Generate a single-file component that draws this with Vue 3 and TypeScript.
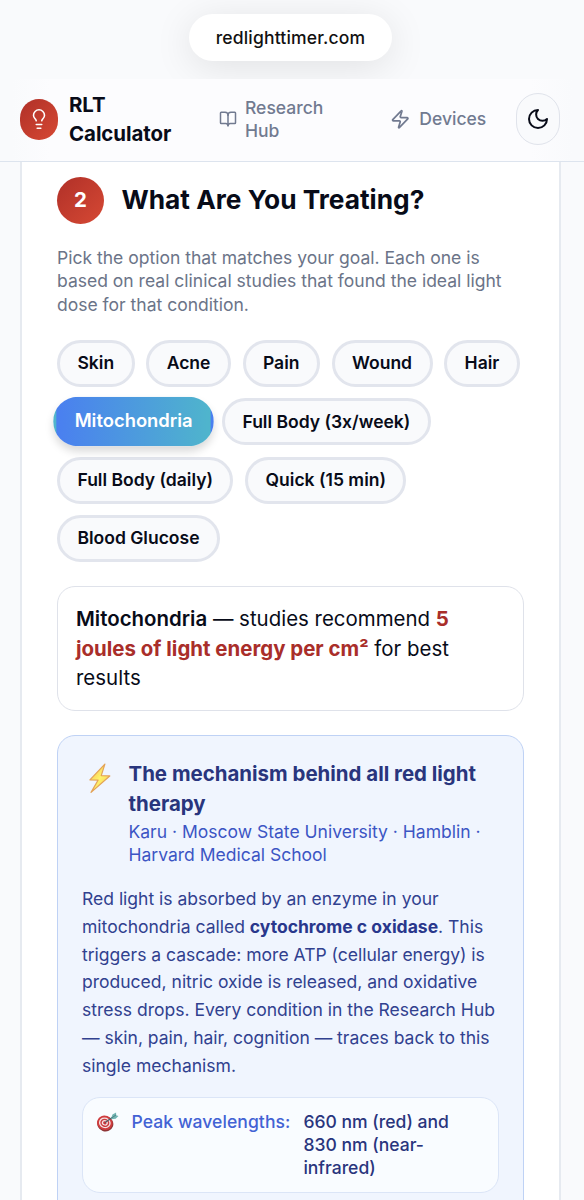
<script setup lang="ts">
interface Treatment {
  label: string
  active?: boolean
}

const treatments: Treatment[] = [
  { label: 'Skin' },
  { label: 'Acne' },
  { label: 'Pain' },
  { label: 'Wound' },
  { label: 'Hair' },
  { label: 'Mitochondria', active: true },
  { label: 'Full Body (3x/week)' },
  { label: 'Full Body (daily)' },
  { label: 'Quick (15 min)' },
  { label: 'Blood Glucose' },
]
</script>

<template>
  <div class="page">
    <div class="address">
      <div class="pill">redlighttimer.com</div>
    </div>

    <header class="nav">
      <div class="brand">
        <span class="logo">
          <svg viewBox="0 0 24 24" class="line-icon bulb">
            <path d="M15 14c.2-1 .7-1.7 1.5-2.5 1-.9 1.5-2.2 1.5-3.5A6 6 0 0 0 6 8c0 1 .2 2.2 1.5 3.5.7.7 1.3 1.5 1.5 2.5" />
            <path d="M9 18h6M10 22h4" />
          </svg>
        </span>
        <span class="brand-name">RLT<br />Calculator</span>
      </div>
      <a class="link research">
        <svg viewBox="0 0 24 24" class="line-icon nav-icon">
          <path d="M12 7v14" />
          <path d="M3 18a1 1 0 0 1-1-1V4a1 1 0 0 1 1-1h5a4 4 0 0 1 4 4 4 4 0 0 1 4-4h5a1 1 0 0 1 1 1v13a1 1 0 0 1-1 1h-6a3 3 0 0 0-3 3 3 3 0 0 0-3-3z" />
        </svg>
        <span>Research<br />Hub</span>
      </a>
      <a class="link devices">
        <svg viewBox="0 0 24 24" class="line-icon zap">
          <path d="M4 14a1 1 0 0 1-.78-1.63l9.9-10.2a.5.5 0 0 1 .86.46l-1.92 6.02A1 1 0 0 0 13 10h7a1 1 0 0 1 .78 1.63l-9.9 10.2a.5.5 0 0 1-.86-.46l1.92-6.02A1 1 0 0 0 11 14z" />
        </svg>
        <span>Devices</span>
      </a>
      <button class="theme" aria-label="Toggle theme">
        <svg viewBox="0 0 24 24" class="line-icon moon">
          <path d="M12 3a6 6 0 0 0 9 9 9 9 0 1 1-9-9Z" />
        </svg>
      </button>
    </header>

    <main class="card">
      <div class="heading">
        <span class="step">2</span>
        <h2>What Are You Treating?</h2>
      </div>
      <p class="intro">
        Pick the option that matches your goal. Each one is<br />
        based on real clinical studies that found the ideal light<br />
        dose for that condition.
      </p>

      <div class="chips">
        <button v-for="t in treatments" :key="t.label" class="chip" :class="{ active: t.active }">{{ t.label }}</button>
      </div>

      <div class="dose">
        <b>Mitochondria</b> — studies recommend <strong>5<br />joules of light energy per cm²</strong> for best<br />results
      </div>

      <section class="info">
        <div class="info-head">
          <svg class="bolt" viewBox="0 0 24 32">
            <defs>
              <linearGradient id="boltFill" x1="0" y1="0" x2="1" y2="1">
                <stop offset="0" stop-color="#f5b54a" />
                <stop offset=".5" stop-color="#fff36b" />
                <stop offset="1" stop-color="#f3c04d" />
              </linearGradient>
            </defs>
            <path d="M17.600 1.500 2 18l8.600.1L3.200 31 22.700 13.900l-8.900-.4Z" fill="url(#boltFill)" stroke="#e3a358" stroke-width="1.300" stroke-linejoin="round" />
          </svg>
          <div>
            <h3>The mechanism behind all red light<br />therapy</h3>
            <p class="source">Karu · Moscow State University · Hamblin ·<br />Harvard Medical School</p>
          </div>
        </div>
        <p class="body">
          Red light is absorbed by an enzyme in your<br />
          mitochondria called <b>cytochrome c oxidase</b>. This<br />
          triggers a cascade: more ATP (cellular energy) is<br />
          produced, nitric oxide is released, and oxidative<br />
          stress drops. Every condition in the Research Hub<br />
          — skin, pain, hair, cognition — traces back to this<br />
          single mechanism.
        </p>
        <div class="fact">
          <svg class="target" viewBox="0 0 24 22">
            <g transform="rotate(20 9.500 12)">
              <ellipse cx="9.800" cy="12.300" rx="8.500" ry="8" fill="#8e3436" />
              <ellipse cx="9" cy="11.500" rx="8.200" ry="7.500" fill="#cf3c3e" />
              <ellipse cx="9" cy="11.500" rx="6.200" ry="5.600" fill="#f5e4e4" />
              <ellipse cx="9" cy="11.500" rx="4.800" ry="4.300" fill="#cb3c40" />
              <ellipse cx="9" cy="11.500" rx="3.200" ry="2.800" fill="#f5e4e4" />
              <ellipse cx="9" cy="11.500" rx="1.800" ry="1.600" fill="#c8353a" />
            </g>
            <path d="m9.500 11 8.500-6" stroke="#4b5c66" stroke-width="1.200" />
            <path d="m16 6 1.200-3.500L21 .5v2.800l2.500.8-3 3-4.500.4Z" fill="#72b4b2" />
            <path d="m16 6.500 5-3.500" stroke="#3f7479" stroke-width=".8" />
          </svg>
          <span class="fact-label">Peak wavelengths:</span>
          <span class="fact-value">660 nm (red) and<br />830 nm (near-<br />infrared)</span>
        </div>
      </section>
    </main>
  </div>
</template>

<style>
body {
  margin: 0;
  background: #f9fafc;
}
</style>

<style scoped>
.page {
  width: 584px;
  height: 1200px;
  overflow: hidden;
  box-sizing: border-box;
  background: #f9fafc;
  color: #080b18;
  font-family: Inter, "Liberation Sans", sans-serif;
  font-size: 17.520px;
  line-height: 23.360px;
}
.page * {
  box-sizing: border-box;
}
h2,
h3,
p {
  margin: 0;
}
button {
  font: inherit;
  color: inherit;
}
.line-icon {
  display: block;
  flex: none;
  fill: none;
  stroke: currentColor;
  stroke-width: 2;
  stroke-linecap: round;
  stroke-linejoin: round;
}
.address {
  height: 79px;
  padding-top: 14px;
  display: flex;
  justify-content: center;
  align-items: flex-start;
}
.pill {
  width: 203px;
  height: 47px;
  margin-right: 3px;
  border-radius: 24px;
  background: #fff;
  box-shadow: 0 6px 38px rgba(0, 0, 0, 0.1);
  color: #111;
  font-weight: 500;
  letter-spacing: 0.170px;
  text-align: center;
  line-height: 48px;
}
.nav {
  position: relative;
  height: 83px;
  padding: 0 24px 2px 20px;
  display: flex;
  align-items: center;
  border-bottom: 1px solid #dde4ee;
  background: linear-gradient(90deg, #f9fafc 12px, #fcfcfe 50px, #fcfcfe 530px, #f9fafc 572px);
}
.brand {
  display: flex;
  align-items: center;
  width: 198.500px;
}
.logo {
  width: 37.500px;
  height: 41px;
  border-radius: 19px;
  display: grid;
  place-items: center;
  background: linear-gradient(135deg, #b03028, #d64934);
  color: #fff;
}
.bulb {
  width: 22px;
  height: 22px;
  stroke-width: 1.700;
}
.brand-name {
  margin-left: 11.500px;
  font-size: 20.440px;
  line-height: 29.200px;
  font-weight: 700;
  letter-spacing: -0.050px;
}
.link {
  display: flex;
  align-items: center;
  color: #717a90;
  font-weight: 500;
}
.nav-icon {
  width: 18px;
  height: 18px;
  margin-right: 8.500px;
}
.zap {
  width: 20.500px;
  height: 20.500px;
  margin-right: 8.500px;
}
.devices {
  margin-left: 67px;
}
.theme {
  margin-left: auto;
  width: 44px;
  height: 52px;
  padding: 0;
  border: 1px solid #e0e3eb;
  border-radius: 22px;
  display: grid;
  place-items: center;
  background: #f9fafc;
}
.moon {
  width: 24px;
  height: 24px;
}
.card {
  width: 541px;
  height: 1060px;
  margin-left: 20px;
  padding: 15px 35px 0;
  border: solid #e6eaf0;
  border-width: 0 2px;
  background: #fff;
}
.heading {
  display: flex;
  align-items: center;
  height: 47px;
}
.step {
  width: 47px;
  height: 47px;
  border-radius: 50%;
  background: linear-gradient(135deg, #b03028, #d64934);
  color: #fff;
  font-size: 20.440px;
  line-height: 46px;
  font-weight: 700;
  text-align: center;
}
h2 {
  margin-left: 17.500px;
  padding-bottom: 2px;
  font-size: 26.280px;
  line-height: 40px;
  font-weight: 700;
  white-space: nowrap;
}
.intro {
  margin-top: 22px;
  color: #6b7488;
  white-space: nowrap;
}
.chips {
  display: flex;
  flex-wrap: wrap;
  gap: 11.680px;
  margin-top: 24px;
}
.chip {
  height: 46.720px;
  padding: 0 17.450px 1px;
  border: 3px solid #e2e5ed;
  border-radius: 24px;
  background: #f9fafc;
  font-weight: 600;
  white-space: nowrap;
}
.chip.active {
  border-color: transparent;
  background: linear-gradient(90deg, #4a7ff0, #4fb5cc);
  color: #fff;
  transform: scale(1.05);
  box-shadow: 0 5px 8px rgba(0, 0, 0, 0.15);
}
.dose {
  margin-top: 24px;
  height: 125px;
  padding: 17.500px 18px;
  border: 1px solid #dfe2ea;
  border-radius: 18px;
  font-size: 20.440px;
  line-height: 29.200px;
  white-space: nowrap;
}
.dose b {
  font-weight: 600;
}
.dose strong {
  color: #a92e2a;
  font-weight: 700;
}
.info {
  margin-top: 24px;
  height: 520px;
  padding: 23.500px 24px;
  border: 1px solid #bfd2f5;
  border-radius: 18px;
  background: #f0f5fe;
  color: #31418f;
}
.info-head {
  display: flex;
  white-space: nowrap;
}
.bolt {
  width: 23px;
  height: 32px;
  margin: 3px 18px 0 5.500px;
  flex: none;
}
h3 {
  color: #29357d;
  font-size: 20.440px;
  line-height: 29.200px;
  font-weight: 700;
}
.source {
  margin-top: 2px;
  color: #3c55c4;
}
.body {
  margin-top: 18.500px;
  line-height: 27.740px;
  white-space: nowrap;
}
.body b {
  color: #29378c;
  font-weight: 700;
}
.fact {
  margin-top: 17.500px;
  height: 96px;
  padding: 12px 13px;
  display: flex;
  border: 1px solid #dbe5f7;
  border-radius: 18px;
  background: #f9fcff;
  font-weight: 500;
}
.target {
  width: 23px;
  height: 21px;
  margin: 2px 12.500px 0 0;
  flex: none;
}
.fact-label {
  color: #4262d4;
  letter-spacing: 0.080px;
  white-space: nowrap;
}
.fact-value {
  margin-left: 13px;
  color: #29357d;
  white-space: nowrap;
}
</style>
